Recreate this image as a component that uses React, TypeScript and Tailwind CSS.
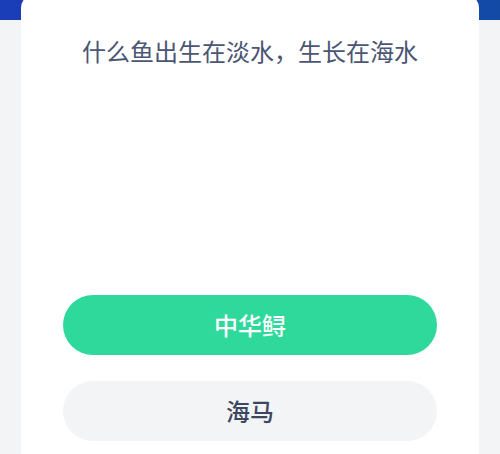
export default function App() {
  return (
    <div
      className="relative w-[500px] h-[454px] overflow-hidden bg-[#f3f4f6]"
      style={{ fontFamily: '"Noto Sans CJK SC", "Noto Sans", sans-serif' }}
    >
      {/* Blue banner strip behind the card */}
      <div className="h-[20px] bg-gradient-to-r from-[#1a3db8] via-[#1d44b4] to-[#134aa6]" />

      {/* Quiz card */}
      <div className="mx-[21px] -mt-[26px] h-[500px] rounded-t-[14px] bg-white px-[42px] pt-[41px]">
        <h2 className="text-center text-[24px] leading-[32px] font-normal text-[#4b5574]">
          什么鱼出生在淡水，生长在海水
        </h2>

        <div className="mt-[228px] flex flex-col gap-[26px]">
          <button className="h-[60px] w-full rounded-full bg-[#2fd99b] text-[24px] font-medium text-white">
            中华鲟
          </button>
          <button className="h-[60px] w-full rounded-full bg-[#f3f4f6] text-[24px] font-medium text-[#3d4660]">
            海马
          </button>
        </div>
      </div>
    </div>
  );
}
